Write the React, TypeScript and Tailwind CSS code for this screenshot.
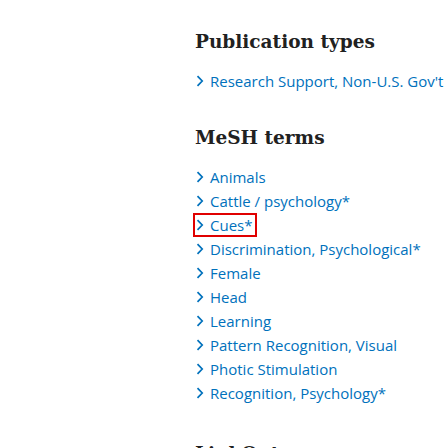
const publicationTypes = ["Research Support, Non-U.S. Gov't"];

const meshTerms = [
  "Animals",
  "Cattle / psychology*",
  "Cues*",
  "Discrimination, Psychological*",
  "Female",
  "Head",
  "Learning",
  "Pattern Recognition, Visual",
  "Photic Stimulation",
  "Recognition, Psychology*",
];

function Chevron() {
  return (
    <svg width="8" height="12" viewBox="0 0 8 12" className="shrink-0">
      <path d="M1.5 1.2 L6.2 6 L1.5 10.8" fill="none" stroke="#0071bc" strokeWidth="1.7" />
    </svg>
  );
}

function TermLink({ label, highlighted }: { label: string; highlighted?: boolean }) {
  return (
    <li className="flex h-6 items-center">
      <a
        href="#"
        className={`flex h-5 items-center gap-[6px] pl-[1px] pr-[3px] text-[15px] text-[#0071bc] ${
          highlighted ? "outline-2 outline-[#e00000]" : ""
        }`}
      >
        <Chevron />
        <span>{label}</span>
      </a>
    </li>
  );
}

function Heading({ children }: { children: string }) {
  return (
    <h2 className="whitespace-nowrap text-[18.5px] font-bold leading-7 text-[#212121] [font-family:'DejaVu_Serif',serif]">
      {children}
    </h2>
  );
}

export default function App() {
  return (
    <div
      className="h-[448px] w-[448px] overflow-hidden bg-white pl-[195px]"
      style={{ fontFamily: '"Open Sans", sans-serif' }}
    >
      <section className="pt-[28px]">
        <Heading>Publication types</Heading>
        <ul className="mt-[13px] whitespace-nowrap">
          {publicationTypes.map((t) => (
            <TermLink key={t} label={t} />
          ))}
        </ul>
      </section>
      <section className="pt-[31px]">
        <Heading>MeSH terms</Heading>
        <ul className="mt-[13px] whitespace-nowrap">
          {meshTerms.map((t) => (
            <TermLink key={t} label={t} highlighted={t === "Cues*"} />
          ))}
        </ul>
      </section>
      <section className="pt-[35px]">
        <Heading>LinkOut</Heading>
      </section>
    </div>
  );
}
